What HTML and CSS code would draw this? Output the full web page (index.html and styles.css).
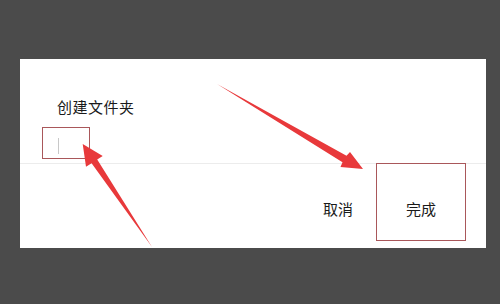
FILE: index.html
```html
<!DOCTYPE html>
<html>
<head>
  <meta charset="UTF-8">
  <title>创建文件夹</title>
  <link rel="stylesheet" href="styles.css">
</head>
<body>
  <div class="dialog">
    <div class="dialog-body">
      <div class="dialog-title">创建文件夹</div>
      <div class="name-input mark">
        <span class="caret"></span>
      </div>
    </div>
    <div class="dialog-footer">
      <button class="btn cancel-btn">取消</button>
      <button class="btn done-btn mark">完成</button>
    </div>
  </div>

  <!-- 标注箭头 -->
  <svg class="arrows" width="500" height="304" viewBox="0 0 500 304">
    <polygon points="217,84 346.5,155.8 350,152 363,169 340.5,167 342.5,162.2" fill="#e8393b"/>
    <polygon points="152,247 97.2,159.4 102.7,156 82.7,144 86,166.7 91.6,163.2" fill="#e8393b"/>
  </svg>
</body>
</html>
```

FILE: styles.css
```css
body {
  margin: 0;
  width: 500px;
  height: 304px;
  background-color: #4b4b4b;
  font-family: 'Noto Sans CJK SC', sans-serif;
  color: #1a1a1a;
  padding-top: 59px;
  box-sizing: border-box;
  position: relative;
  overflow: hidden;
}

.dialog {
  margin-left: 20px;
  width: 466px;
  height: 189px;
  background-color: #fff;
  display: flex;
  flex-direction: column;
}

.dialog-body {
  height: 105px;
  box-sizing: border-box;
  padding: 38px 0 0 22px;
  border-bottom: 1px solid #ececec;
}

.dialog-title {
  font-size: 15px;
  line-height: 20px;
  margin-left: 15px;
  margin-bottom: 10px;
  letter-spacing: 0.5px;
}

/* 红色标注框 */
.mark {
  border: 1px solid #a9575a;
}

.name-input {
  width: 48px;
  height: 32px;
  box-sizing: border-box;
  display: flex;
  align-items: center;
  padding-left: 15px;
  padding-top: 6px;
}

.caret {
  width: 1px;
  height: 16px;
  background-color: #c8c8c8;
}

.dialog-footer {
  display: flex;
  justify-content: flex-end;
  align-items: flex-start;
  padding-right: 20px;
}

.btn {
  background: none;
  border: none;
  font-family: inherit;
  font-size: 15px;
  color: #1a1a1a;
  padding: 0;
}

.cancel-btn {
  margin-top: 35px;
  margin-right: 23px;
  line-height: 20px;
}

.done-btn {
  width: 90px;
  height: 78px;
  margin-top: -1px;
  box-sizing: border-box;
  padding-top: 13px;
  border: 1px solid #a9575a;
}

.arrows {
  position: absolute;
  top: 0;
  left: 0;
}
```
